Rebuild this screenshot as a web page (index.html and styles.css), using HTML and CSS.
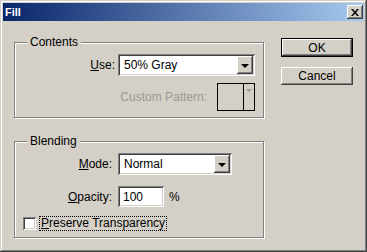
FILE: index.html
```html
<!DOCTYPE html>
<html lang="en">
<head>
    <meta charset="UTF-8">
    <title>Fill</title>
    <link rel="stylesheet" href="styles.css">
</head>
<body>
    <div class="window">
        <div class="titlebar">
            <span class="title">Fill</span>
            <button type="button" class="close">
                <svg width="8" height="7" viewBox="0 0 8 7"><path d="M0 0h2l2 2.5L6 0h2L5 3.5 8 7H6L4 4.5 2 7H0l3-3.5z" fill="#000"/></svg>
            </button>
        </div>
        <div class="dialog">
            <div class="groups">
                <fieldset class="group contents">
                    <legend>Contents</legend>
                    <div class="row">
                        <label class="field-label"><u>U</u>se:</label>
                        <div class="select use-select">
                            <span class="select-value">50% Gray</span>
                            <span class="drop"><span class="arrow"></span></span>
                        </div>
                    </div>
                    <div class="row pattern-row">
                        <label class="disabled">Custom Pattern:</label>
                        <div class="pattern">
                            <span class="pattern-swatch"></span>
                            <span class="pattern-drop"><span class="arrow small"></span></span>
                        </div>
                    </div>
                </fieldset>
                <fieldset class="group blending">
                    <legend>Blending</legend>
                    <div class="row">
                        <label class="field-label"><u>M</u>ode:</label>
                        <div class="select mode-select">
                            <span class="select-value">Normal</span>
                            <span class="drop"><span class="arrow"></span></span>
                        </div>
                    </div>
                    <div class="row">
                        <label class="field-label"><u>O</u>pacity:</label>
                        <span class="textbox">100</span>
                        <span class="unit">%</span>
                    </div>
                    <div class="check-row">
                        <span class="checkbox"></span>
                        <span class="check-label"><u>P</u>reserve Transparency</span>
                    </div>
                </fieldset>
            </div>
            <div class="buttons">
                <button type="button" class="button default">OK</button>
                <button type="button" class="button">Cancel</button>
            </div>
        </div>
    </div>
</body>
</html>
```

FILE: styles.css
```css
body {
    margin: 0;
    font-family: "Liberation Sans", Arial, sans-serif;
    font-size: 12px;
    color: #000;
    background: #d4d0c8;
}

.window {
    width: 367px;
    height: 252px;
    box-sizing: border-box;
    padding: 3px;
    background: #d4d0c8;
    box-shadow: inset -1px -1px #404040, inset 1px 1px #d4d0c8, inset -2px -2px #808080, inset 2px 2px #fff;
}

.titlebar {
    height: 18px;
    display: flex;
    align-items: center;
    justify-content: space-between;
    padding: 0 1px 0 2px;
    background: linear-gradient(to right, #0a246a, #a6caf0);
}

.title {
    color: #fff;
    font-weight: bold;
    font-size: 11px;
}

.close {
    width: 16px;
    height: 14px;
    padding: 0;
    border: 0;
    display: flex;
    align-items: center;
    justify-content: center;
    background: #d4d0c8;
    box-shadow: inset -1px -1px #404040, inset 1px 1px #fff, inset -2px -2px #808080;
}

.dialog {
    display: flex;
    padding: 0 0 0 11px;
}

.groups {
    width: 250px;
}

.group {
    margin: 14px 0 0 0;
    padding: 0;
    min-width: 0;
    border: 1px solid #808080;
    box-shadow: inset 1px 1px #fff, 1px 1px #fff;
}

.blending {
    margin-top: 16px;
}

legend {
    margin-left: 12px;
    padding: 0 3px;
    line-height: 14px;
    background: #d4d0c8;
}

.row {
    display: flex;
    align-items: center;
}

.field-label {
    width: 100px;
    margin-right: 3px;
    text-align: right;
}

.blending .field-label {
    width: 97px;
    margin-right: 6px;
}

.contents .row:first-of-type {
    margin-top: 5px;
}

.pattern-row {
    width: 240px;
    justify-content: flex-end;
    margin: 7px 0 6px 0;
}

.pattern-row label {
    margin-right: 10px;
}

.blending .row:first-of-type {
    margin-top: 5px;
}

.blending .row + .row {
    margin-top: 11px;
}

.disabled {
    color: #9c9890;
}

.select,
.textbox {
    box-sizing: border-box;
    display: flex;
    align-items: center;
    background: #fff;
    box-shadow: inset 1px 1px #808080, inset -1px -1px #fff, inset 2px 2px #404040, inset -2px -2px #d4d0c8;
}

.select {
    height: 22px;
    padding: 2px;
}

.use-select {
    width: 137px;
}

.mode-select {
    width: 114px;
}

.select-value {
    flex: 1;
    padding-left: 4px;
}

.drop {
    width: 16px;
    height: 18px;
    display: flex;
    align-items: center;
    justify-content: center;
    background: #d4d0c8;
    box-shadow: inset -1px -1px #404040, inset 1px 1px #fff, inset -2px -2px #808080;
}

.arrow {
    width: 0;
    height: 0;
    border-left: 4px solid transparent;
    border-right: 4px solid transparent;
    border-top: 4px solid #000;
    margin-top: 1px;
}

.arrow.small {
    border-left-width: 3px;
    border-right-width: 3px;
    border-top: 3px solid #9c9890;
    margin-top: 0;
}

.pattern {
    width: 38px;
    height: 28px;
    box-sizing: border-box;
    display: flex;
    border: 1px solid #000;
}

.pattern-swatch {
    width: 25px;
    border-right: 1px solid #000;
}

.pattern-drop {
    flex: 1;
    display: flex;
    justify-content: center;
    padding-top: 5px;
}

.textbox {
    width: 46px;
    height: 21px;
    padding-left: 5px;
}

.unit {
    margin-left: 5px;
}

.check-row {
    display: flex;
    align-items: center;
    padding: 10px 0 7px 8px;
}

.checkbox {
    width: 13px;
    height: 13px;
    box-sizing: border-box;
    background: #fff;
    box-shadow: inset 1px 1px #808080, inset -1px -1px #fff, inset 2px 2px #404040, inset -2px -2px #d4d0c8;
}

.check-label {
    margin-left: 4px;
    padding: 0 1px;
    line-height: 13px;
    outline: 1px dotted #000;
}

.buttons {
    margin: 17px 0 0 17px;
    display: flex;
    flex-direction: column;
    gap: 10px;
}

.button {
    width: 72px;
    height: 18px;
    padding: 0;
    border: 0;
    font-family: "Liberation Sans", Arial, sans-serif;
    font-size: 12px;
    color: #000;
    background: #d4d0c8;
    box-shadow: inset -1px -1px #404040, inset 1px 1px #fff, inset -2px -2px #808080;
}

.button.default {
    border: 1px solid #000;
    height: 19px;
}
```
